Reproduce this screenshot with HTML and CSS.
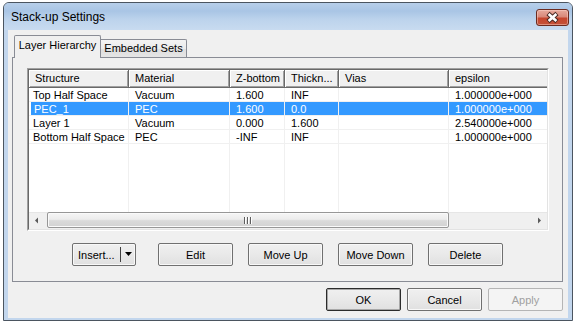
FILE: index.html
```html
<!DOCTYPE html>
<html>
<head>
<meta charset="utf-8">
<title>Stack-up Settings</title>
<link rel="stylesheet" href="styles.css">
</head>
<body>
<div class="window">
  <div class="titlebar">
    <span class="title">Stack-up Settings</span>
    <div class="close">
      <svg width="33" height="17" viewBox="0 0 33 17">
        <path d="M12 4.5 L21 12.5 M21 4.5 L12 12.5" stroke="#4a2a24" stroke-width="4.6" fill="none"/>
        <path d="M12.6 5 L20.4 12 M20.4 5 L12.6 12" stroke="#ffffff" stroke-width="2.6" fill="none"/>
      </svg>
    </div>
  </div>
  <div class="client">
    <div class="tabs">
      <div class="tab active">Layer Hierarchy</div>
      <div class="tab">Embedded Sets</div>
    </div>
    <div class="panel">
      <div class="list">
        <div class="list-in">
          <div class="lv-header">
            <div class="hc">Structure</div>
            <div class="hc">Material</div>
            <div class="hc">Z-bottom</div>
            <div class="hc">Thickn...</div>
            <div class="hc">Vias</div>
            <div class="hc">epsilon</div>
          </div>
          <div class="lv-body">
            <div class="row">
              <div class="cell">Top Half Space</div>
              <div class="cell">Vacuum</div>
              <div class="cell">1.600</div>
              <div class="cell">INF</div>
              <div class="cell"></div>
              <div class="cell">1.000000e+000</div>
            </div>
            <div class="row selected">
              <div class="cell">PEC_1</div>
              <div class="cell">PEC</div>
              <div class="cell">1.600</div>
              <div class="cell">0.0</div>
              <div class="cell"></div>
              <div class="cell">1.000000e+000</div>
            </div>
            <div class="row">
              <div class="cell">Layer 1</div>
              <div class="cell">Vacuum</div>
              <div class="cell">0.000</div>
              <div class="cell">1.600</div>
              <div class="cell"></div>
              <div class="cell">2.540000e+000</div>
            </div>
            <div class="row">
              <div class="cell">Bottom Half Space</div>
              <div class="cell">PEC</div>
              <div class="cell">-INF</div>
              <div class="cell">INF</div>
              <div class="cell"></div>
              <div class="cell">1.000000e+000</div>
            </div>
            <div class="row filler">
              <div class="cell"></div>
              <div class="cell"></div>
              <div class="cell"></div>
              <div class="cell"></div>
              <div class="cell"></div>
              <div class="cell"></div>
            </div>
          </div>
          <div class="hscroll">
            <div class="sb-btn">
              <svg width="17" height="17" viewBox="0 0 17 17"><path d="M6 8.5 L9 5.5 L9 11.5 Z" fill="#5a5a5a"/></svg>
            </div>
            <div class="sb-track">
              <div class="sb-thumb">
                <svg class="grip" width="8" height="7" viewBox="0 0 8 7">
                  <rect x="0" y="0" width="1" height="7" fill="#5e5e5e"/>
                  <rect x="3" y="0" width="1" height="7" fill="#5e5e5e"/>
                  <rect x="6" y="0" width="1" height="7" fill="#5e5e5e"/>
                  <rect x="1" y="0" width="1" height="7" fill="#ffffff"/>
                  <rect x="4" y="0" width="1" height="7" fill="#ffffff"/>
                  <rect x="7" y="0" width="1" height="7" fill="#ffffff"/>
                </svg>
              </div>
            </div>
            <div class="sb-btn">
              <svg width="17" height="17" viewBox="0 0 17 17"><path d="M11 8.5 L8 5.5 L8 11.5 Z" fill="#5a5a5a"/></svg>
            </div>
          </div>
        </div>
      </div>
      <div class="actions">
        <div class="btn split">
          <span class="split-label">Insert...</span>
          <span class="split-div"></span>
          <svg class="split-arrow" width="8" height="5" viewBox="0 0 8 5"><path d="M0 0 L7 0 L3.5 4 Z" fill="#000"/></svg>
        </div>
        <div class="btn w-edit">Edit</div>
        <div class="btn">Move Up</div>
        <div class="btn">Move Down</div>
        <div class="btn">Delete</div>
      </div>
    </div>
    <div class="footer">
      <div class="btn default">OK</div>
      <div class="btn">Cancel</div>
      <div class="btn disabled">Apply</div>
    </div>
  </div>
</div>
</body>
</html>
```

FILE: styles.css
```css
* { box-sizing: border-box; }

body {
  margin: 0;
  background: #ffffff;
  font-family: "Liberation Sans", Arial, sans-serif;
  font-size: 11px;
  color: #000;
}

.window {
  margin: 2px 0 0 3px;
  width: 570px;
  height: 319px;
  border: 1px solid #4b5560;
  border-radius: 6px 6px 0 0;
  background: #c2d6ed;
  display: flex;
  flex-direction: column;
  overflow: hidden;
}

.titlebar {
  height: 27px;
  flex: none;
  display: flex;
  align-items: center;
  justify-content: space-between;
  padding: 0 3px 0 7px;
  background: linear-gradient(to bottom, #b7cfea 0%, #a9c5e5 30%, #bcd3ec 60%, #c8dbf0 100%);
}

.title {
  font-size: 12px;
  color: #000;
  padding-top: 1px;
}

.close {
  width: 33px;
  height: 17px;
  margin-top: 1px;
  border: 1px solid #6b2b20;
  border-radius: 3px;
  background: linear-gradient(to bottom, #e7aa9d 0%, #d9897a 45%, #c6462e 55%, #c4533a 100%);
  box-shadow: inset 0 0 0 1px rgba(255, 220, 210, 0.45);
  display: flex;
  align-items: center;
  justify-content: center;
  overflow: hidden;
}

.close svg { display: block; margin: -1px; }

.client {
  flex: 1;
  margin: 0 4px 2px 4px;
  background: #f0f0f0;
  padding-top: 5px;
  display: flex;
  flex-direction: column;
}

.tabs {
  height: 23px;
  margin-bottom: -1px;
  padding-left: 6px;
  display: flex;
  align-items: flex-end;
  position: relative;
  z-index: 1;
}

.tab {
  height: 18px;
  width: 86px;
  margin-bottom: 1px;
  border: 1px solid #898c95;
  border-bottom: none;
  border-left: none;
  border-radius: 0 2px 0 0;
  background: linear-gradient(to bottom, #f3f3f3 0%, #ebebeb 50%, #dedede 51%, #e5e5e5 100%);
  text-align: center;
  line-height: 16px;
}

.tab.active {
  height: 23px;
  width: 87px;
  margin-bottom: 0;
  border-left: 1px solid #898c95;
  border-radius: 2px 2px 0 0;
  background: #f0f0f0;
  line-height: 19px;
}

.panel {
  height: 225px;
  margin: 0 5px 0 4px;
  border: 1px solid #898c95;
  background: #f0f0f0;
  padding: 10px 0 0 14px;
}

.list {
  width: 522px;
  height: 163px;
  border: 1px solid;
  border-color: #a0a0a0 #ffffff #ffffff #a0a0a0;
}

.list-in {
  height: 100%;
  border: 1px solid;
  border-color: #696969 #e3e3e3 #e3e3e3 #696969;
  background: #ffffff;
  display: flex;
  flex-direction: column;
  overflow: hidden;
}

.lv-header,
.row {
  display: grid;
  grid-template-columns: 100px 101px 55px 54px 110px 120px;
  width: 540px;
}

.lv-header {
  height: 18px;
  flex: none;
  border-bottom: 1px solid #696969;
  background: #f0f0f0;
}

.hc {
  border-right: 1px solid #696969;
  box-shadow: inset 1px 1px 0 #ffffff, inset -1px -1px 0 #a0a0a0;
  padding-left: 6px;
  line-height: 17px;
  white-space: nowrap;
  overflow: hidden;
}

.lv-body {
  flex: 1;
  display: flex;
  flex-direction: column;
  overflow: hidden;
}

.row {
  height: 14px;
  flex: none;
  border-bottom: 1px solid #f0f0f0;
}

.cell {
  border-right: 1px solid #f0f0f0;
  padding-left: 6px;
  line-height: 14px;
  white-space: nowrap;
  overflow: hidden;
}

.cell:first-child { padding-left: 4px; }

.row.selected .cell {
  background: #3399ff;
  color: #ffffff;
}

.row.selected .cell:first-child {
  background: linear-gradient(to right, transparent 2px, #3399ff 2px);
  padding-left: 5px;
}

.row.filler {
  flex: 1;
  height: auto;
  border-bottom: none;
}

.hscroll {
  height: 17px;
  flex: none;
  display: flex;
  background: #f0f0f0;
  box-shadow: inset 0 1px 0 #e6e6e6;
}

.sb-btn {
  width: 17px;
  flex: none;
}

.sb-btn svg { display: block; }

.sb-track {
  flex: 1;
  padding: 0 0 0 1px;
}

.sb-thumb {
  width: 402px;
  height: 16px;
  border: 1px solid #979797;
  border-radius: 2px;
  background: linear-gradient(to bottom, #f6f6f6 0%, #ececec 45%, #dadada 55%, #d2d2d2 100%);
  box-shadow: inset 0 0 0 1px #fafafa;
  display: flex;
  align-items: center;
  justify-content: center;
}

.grip { display: block; }

.actions {
  margin-top: 12px;
  padding-left: 45px;
  display: flex;
  gap: 15px;
}

.btn {
  width: 75px;
  height: 23px;
  border: 1px solid #707070;
  border-radius: 2px;
  background: linear-gradient(to bottom, #f0f0f0 0%, #e9e9e9 50%, #e0e0e0 100%);
  box-shadow: inset 0 0 0 1px #f8f8f8;
  display: flex;
  align-items: center;
  justify-content: center;
  white-space: nowrap;
}

.btn.split {
  width: 64px;
  justify-content: flex-start;
  padding-left: 5px;
}

.split-label { flex: none; }

.split-div {
  width: 1px;
  height: 15px;
  background: #404040;
  margin-left: 5px;
  flex: none;
}

.split-arrow {
  display: block;
  margin-left: 4px;
  flex: none;
}

.btn.w-edit { margin-left: 7px; }

.footer {
  margin-top: 6px;
  padding-right: 5px;
  display: flex;
  justify-content: flex-end;
  gap: 6px;
}

.btn.default {
  border-color: #2b2b2b;
  box-shadow: inset 0 0 0 1px #a8a8a8;
}

.btn.disabled {
  color: #a0a0a0;
  border-color: #b5b5b5;
  background: #f4f4f4;
  box-shadow: none;
}
```
